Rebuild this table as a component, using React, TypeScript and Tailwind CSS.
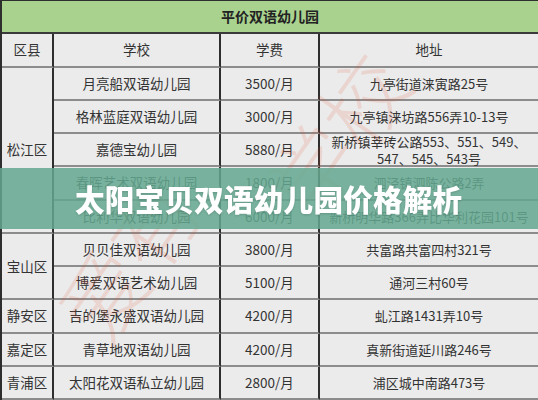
import React from "react";

type Row = {
  district?: string;
  span?: number;
  school: string;
  fee: string;
  address: React.ReactNode;
};

const rows: Row[] = [
  { district: "松江区", span: 5, school: "月亮船双语幼儿园", fee: "3500/月", address: "九亭街道涞寅路25号" },
  { school: "格林蓝庭双语幼儿园", fee: "3000/月", address: "九亭镇涞坊路556弄10-13号" },
  {
    school: "嘉德宝幼儿园",
    fee: "5880/月",
    address: (
      <>
        新桥镇莘砖公路553、551、549、
        <br />
        547、545、543号
      </>
    ),
  },
  { school: "春晖艺术双语幼儿园", fee: "1800/月", address: "泗泾镇泗陈公路2弄" },
  { school: "比利华双语幼儿园", fee: "6000/月", address: "新桥明华路366弄比华利花园101号" },
  { district: "宝山区", span: 2, school: "贝贝佳双语幼儿园", fee: "3800/月", address: "共富路共富四村321号" },
  { school: "博爱双语艺术幼儿园", fee: "5100/月", address: "通河三村60号" },
  { district: "静安区", span: 1, school: "吉的堡永盛双语幼儿园", fee: "4200/月", address: "虬江路1431弄10号" },
  { district: "嘉定区", span: 1, school: "青草地双语幼儿园", fee: "4200/月", address: "真新街道延川路246号" },
  { district: "青浦区", span: 1, school: "太阳花双语私立幼儿园", fee: "2800/月", address: "浦区城中南路473号" },
];

const cell =
  "flex items-center justify-center text-center border-b-2 border-b-[#8c8c8c] bg-[#ebebeb] text-[#333] text-[13.5px] leading-[17px]";
const vline = "border-r-2 border-r-[#2e2e2e]";

const App = () => {
  return (
    <div
      className="relative w-[538px] h-[400px] overflow-hidden bg-[#ebebeb]"
      style={{ fontFamily: '"Noto Sans CJK SC", "Noto Sans", sans-serif' }}
    >
      <div className="grid h-full w-full grid-cols-[52px_167px_99px_1fr] grid-rows-[repeat(12,minmax(0,1fr))] border-l-2 border-t border-[#2e2e2e]">
        <div className="col-span-4 flex items-center justify-center bg-[#a9d28f] border-b-2 border-b-[#3a3a3a] text-[14px] font-bold text-[#222]">
          平价双语幼儿园
        </div>

        <div className={`${cell} ${vline}`}>区县</div>
        <div className={`${cell} ${vline}`}>学校</div>
        <div className={`${cell} ${vline}`}>学费</div>
        <div className={cell}>地址</div>

        {rows.map((r, i) => (
          <React.Fragment key={i}>
            {r.district && (
              <div
                className={`${cell} ${vline} border-b-[#2e2e2e] ${
                  r.span === 5 ? "row-span-5" : r.span === 2 ? "row-span-2" : ""
                }`}
              >
                {r.district}
              </div>
            )}
            <div className={`${cell} ${vline}`}>{r.school}</div>
            <div className={`${cell} ${vline}`}>{r.fee}</div>
            <div className={`${cell} text-[13px] leading-[17px]`}>{r.address}</div>
          </React.Fragment>
        ))}
      </div>

      {/* faint watermark */}
      <div className="pointer-events-none absolute left-[40px] top-[215px] rotate-[-55deg] text-[86px] font-light leading-none text-[#e0502e] opacity-[0.14] whitespace-nowrap">
        爱有
      </div>
      <div className="pointer-events-none absolute left-[250px] top-[90px] rotate-[-55deg] text-[86px] font-light leading-none text-[#e0502e] opacity-[0.14] whitespace-nowrap">
        学校
      </div>

      {/* title band */}
      <div className="absolute left-0 right-0 top-[168px] h-[61px] bg-[#64a890]/85 flex items-center pl-[75px]">
        <span className="text-white text-[29.5px] font-black tracking-[0.3px] leading-none drop-shadow-[0_1px_1px_rgba(0,0,0,0.15)]">
          太阳宝贝双语幼儿园价格解析
        </span>
      </div>
    </div>
  );
};

export default App;
